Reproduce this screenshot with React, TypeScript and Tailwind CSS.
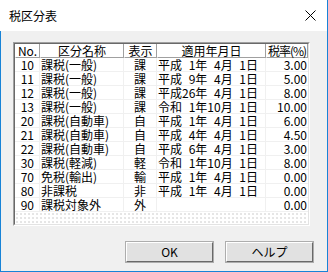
import React from 'react';

type Row = { no: string; name: string; mark: string; date: string; rate: string };

const rows: Row[] = [
  { no: '10', name: '課税(一般)', mark: '課', date: '平成\u20071年\u20074月\u20071日', rate: '3.00' },
  { no: '11', name: '課税(一般)', mark: '課', date: '平成\u20079年\u20074月\u20071日', rate: '5.00' },
  { no: '12', name: '課税(一般)', mark: '課', date: '平成26年\u20074月\u20071日', rate: '8.00' },
  { no: '13', name: '課税(一般)', mark: '課', date: '令和\u20071年10月\u20071日', rate: '10.00' },
  { no: '20', name: '課税(自動車)', mark: '自', date: '平成\u20071年\u20074月\u20071日', rate: '6.00' },
  { no: '21', name: '課税(自動車)', mark: '自', date: '平成\u20074年\u20074月\u20071日', rate: '4.50' },
  { no: '22', name: '課税(自動車)', mark: '自', date: '平成\u20076年\u20074月\u20071日', rate: '3.00' },
  { no: '30', name: '課税(軽減)', mark: '軽', date: '令和\u20071年10月\u20071日', rate: '8.00' },
  { no: '70', name: '免税(輸出)', mark: '輸', date: '平成\u20071年\u20074月\u20071日', rate: '0.00' },
  { no: '80', name: '非課税', mark: '非', date: '平成\u20071年\u20074月\u20071日', rate: '0.00' },
  { no: '90', name: '課税対象外', mark: '外', date: '', rate: '0.00' },
];

const cols = 'grid grid-cols-[25px_84px_33px_109px_42px]';
const cell = 'whitespace-pre border-b border-r border-[#f0f0f0] h-[14px] leading-[14px]';

function Header({ children, tight }: { children: React.ReactNode; tight?: boolean }) {
  return (
    <div
      className={`flex h-[14px] items-center justify-center whitespace-nowrap border-b border-l border-r border-b-[#a0a0a0] border-l-white border-r-[#a0a0a0] bg-white leading-[14px] ${
        tight ? 'tracking-[-1px]' : ''
      }`}
    >
      {children}
    </div>
  );
}

export default function App() {
  return (
    <div
      className="flex h-[272px] w-[328px] flex-col bg-[#f0f0f0] text-[12px] text-black"
      style={{ fontFamily: '"Noto Sans CJK JP", "Liberation Sans", sans-serif' }}
    >
      <div className="flex h-[31px] items-center justify-between border-r border-[#1883d7] bg-white pl-[9px] pr-[11px]">
        <span className="text-[12px]">税区分表</span>
        <svg width="11" height="11" viewBox="0 0 11 11" aria-hidden>
          <path d="M0.5 0.5 10.5 10.5 M10.5 0.5 0.5 10.5" stroke="#000" strokeWidth="1" />
        </svg>
      </div>

      <div className="flex flex-1 flex-col border-x border-b border-[#1883d7] pl-[12px] pt-[11px]">
        <div className="h-[184px] w-[297px] border border-b-white border-l-[#a0a0a0] border-r-white border-t-[#a0a0a0]">
          <div className="flex h-full flex-col border border-b-[#e3e3e3] border-l-[#696969] border-r-[#e3e3e3] border-t-[#696969] bg-white">
            <div className={cols}>
              <Header>No.</Header>
              <Header>区分名称</Header>
              <Header>表示</Header>
              <Header>適用年月日</Header>
              <Header tight>税率(%)</Header>
            </div>
            {rows.map((r) => (
              <div key={r.no} className={cols}>
                <div className={`${cell} pr-[5px] text-right`}>{r.no}</div>
                <div className={`${cell} pl-[1px]`}>{r.name}</div>
                <div className={`${cell} text-center`}>{r.mark}</div>
                <div className={`${cell} pl-[1px]`}>{r.date}</div>
                <div className={`${cell} border-r-0 pr-[1px] text-right`}>{r.rate}</div>
              </div>
            ))}
            <div className="flex-1 bg-[radial-gradient(#e4e4e4_0.7px,transparent_0.8px)] bg-[length:4px_4px]" />
          </div>
        </div>

        <div className="mt-[16px] flex justify-end gap-[13px] pr-[14px]">
          <button
            type="button"
            className="h-[20px] w-[87px] border border-b-[#696969] border-l-white border-r-[#696969] border-t-white bg-[#e1e1e1] leading-none outline outline-1 outline-[#adadad]"
          >
            OK
          </button>
          <button
            type="button"
            className="h-[20px] w-[87px] border border-b-[#696969] border-l-white border-r-[#696969] border-t-white bg-[#e1e1e1] leading-none outline outline-1 outline-[#adadad]"
          >
            ヘルプ
          </button>
        </div>
      </div>
    </div>
  );
}
